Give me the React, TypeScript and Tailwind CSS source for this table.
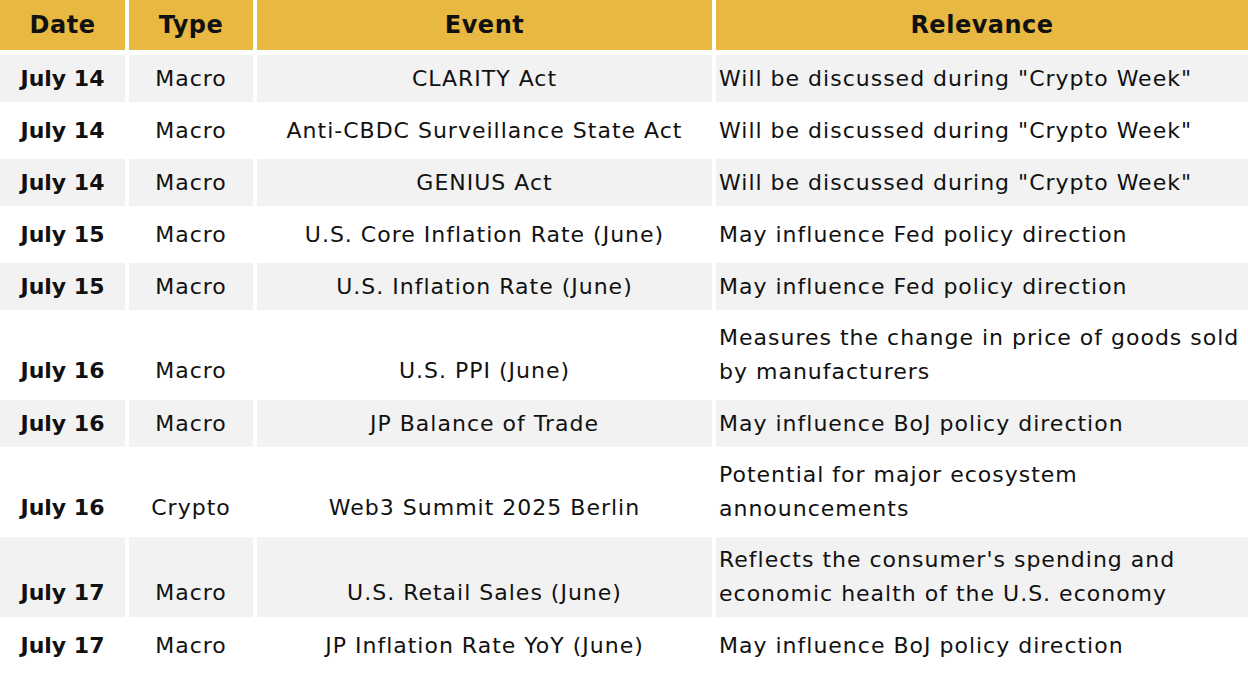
const rows = [
  { date: "July 14", type: "Macro", event: "CLARITY Act", rel: 'Will be discussed during "Crypto Week"' },
  { date: "July 14", type: "Macro", event: "Anti-CBDC Surveillance State Act", rel: 'Will be discussed during "Crypto Week"' },
  { date: "July 14", type: "Macro", event: "GENIUS Act", rel: 'Will be discussed during "Crypto Week"' },
  { date: "July 15", type: "Macro", event: "U.S. Core Inflation Rate (June)", rel: "May influence Fed policy direction" },
  { date: "July 15", type: "Macro", event: "U.S. Inflation Rate (June)", rel: "May influence Fed policy direction" },
  { date: "July 16", type: "Macro", event: "U.S. PPI (June)", rel: "Measures the change in price of goods sold by manufacturers", tall: true },
  { date: "July 16", type: "Macro", event: "JP Balance of Trade", rel: "May influence BoJ policy direction" },
  { date: "July 16", type: "Crypto", event: "Web3 Summit 2025 Berlin", rel: "Potential for major ecosystem announcements", tall: true },
  { date: "July 17", type: "Macro", event: "U.S. Retail Sales (June)", rel: "Reflects the consumer's spending and economic health of the U.S. economy", tall: true },
  { date: "July 17", type: "Macro", event: "JP Inflation Rate YoY (June)", rel: "May influence BoJ policy direction" },
];

const cols = "grid grid-cols-[125px_124px_455px_532px] gap-x-[4px]";

export default function App() {
  return (
    <div className="w-[1248px] h-[676px] bg-white text-[#111] font-['DejaVu_Sans',sans-serif]">
      <div className={`${cols} h-[50px]`}>
        {["Date", "Type", "Event", "Relevance"].map((h) => (
          <div key={h} className="bg-[#e7b942] flex items-center justify-center text-[24px] tracking-[0.5px] font-bold">
            {h}
          </div>
        ))}
      </div>
      <div className="flex flex-col gap-y-[5px] mt-[5px]">
        {rows.map((r, i) => {
          const bg = i % 2 === 0 ? "bg-[#f2f2f2]" : "bg-white";
          const h = r.tall ? "h-[80px]" : "h-[47px]";
          const align = r.tall ? "items-end pb-[7px]" : "items-center";
          return (
            <div key={i} className={`${cols} ${h} text-[22px] leading-[34px] tracking-[1px]`}>
              <div className={`${bg} flex ${align} justify-center font-bold tracking-normal`}>{r.date}</div>
              <div className={`${bg} flex ${align} justify-center`}>{r.type}</div>
              <div className={`${bg} flex ${align} justify-center`}>{r.event}</div>
              <div className={`${bg} flex items-center pl-[3px]`}>{r.rel}</div>
            </div>
          );
        })}
      </div>
    </div>
  );
}
